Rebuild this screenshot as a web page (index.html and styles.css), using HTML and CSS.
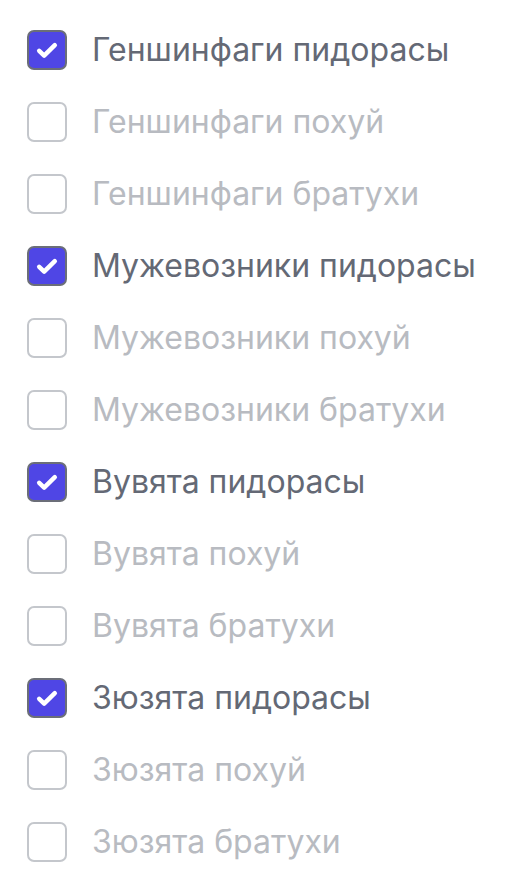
FILE: index.html
```html
<!DOCTYPE html>
<html lang="ru">
<head>
<meta charset="utf-8">
<link rel="stylesheet" href="styles.css">
</head>
<body>
<ul class="list">
  <li class="row checked"><span class="box"><svg viewBox="0 0 20 20"><path d="M4.8 10.6l3.3 3.1L15.2 6.8" /></svg></span><span class="label">Геншинфаги пидорасы</span></li>
  <li class="row"><span class="box"></span><span class="label">Геншинфаги похуй</span></li>
  <li class="row"><span class="box"></span><span class="label">Геншинфаги братухи</span></li>
  <li class="row checked"><span class="box"><svg viewBox="0 0 20 20"><path d="M4.8 10.6l3.3 3.1L15.2 6.8" /></svg></span><span class="label">Мужевозники пидорасы</span></li>
  <li class="row"><span class="box"></span><span class="label">Мужевозники похуй</span></li>
  <li class="row"><span class="box"></span><span class="label">Мужевозники братухи</span></li>
  <li class="row checked"><span class="box"><svg viewBox="0 0 20 20"><path d="M4.8 10.6l3.3 3.1L15.2 6.8" /></svg></span><span class="label">Вувята пидорасы</span></li>
  <li class="row"><span class="box"></span><span class="label">Вувята похуй</span></li>
  <li class="row"><span class="box"></span><span class="label">Вувята братухи</span></li>
  <li class="row checked"><span class="box"><svg viewBox="0 0 20 20"><path d="M4.8 10.6l3.3 3.1L15.2 6.8" /></svg></span><span class="label">Зюзята пидорасы</span></li>
  <li class="row"><span class="box"></span><span class="label">Зюзята похуй</span></li>
  <li class="row"><span class="box"></span><span class="label">Зюзята братухи</span></li>
</ul>
</body>
</html>
```
FILE: styles.css
```css
html, body {
  margin: 0;
  padding: 0;
  background: #ffffff;
}
body {
  font-family: Inter, "Noto Sans", sans-serif;
}
.list {
  list-style: none;
  margin: 0;
  padding: 14px 0 0 27px;
}
.row {
  display: flex;
  align-items: center;
  gap: 25px;
  height: 72px;
}
.box {
  box-sizing: border-box;
  width: 40px;
  height: 40px;
  border: 2px solid #c4c7cc;
  border-radius: 7px;
  background: #fff;
  display: flex;
  align-items: center;
  justify-content: center;
  flex: none;
}
.box svg {
  width: 30px;
  height: 30px;
  fill: none;
  stroke: #fff;
  stroke-width: 3;
  stroke-linecap: round;
  stroke-linejoin: round;
}
.checked .box {
  background: #4f46e5;
  border-color: #6b6e78;
}
.label {
  font-size: 32px;
  line-height: 1;
  color: #b8bbc1;
}
.checked .label {
  color: #646975;
}
```
